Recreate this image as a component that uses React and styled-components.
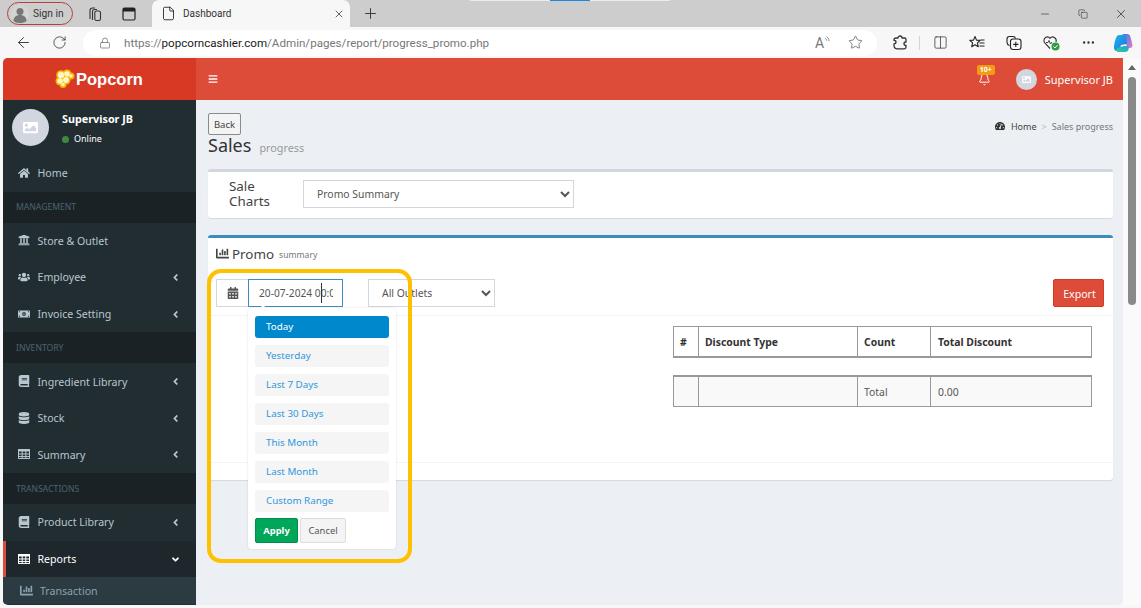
import React from 'react';
import styled, { createGlobalStyle } from 'styled-components';
import { FaHome, FaUniversity, FaUsers, FaMoneyBillAlt, FaBook, FaDatabase, FaChartBar, FaTachometerAlt, FaCalendarAlt, FaAngleLeft, FaAngleDown, FaImage, FaBars, FaCaretUp } from 'react-icons/fa';
import { ArrowLeft, RotateCw, Lock, Star, Plus, X, Minus, File, Copy, Columns2, MoreHorizontal, Bell as BellIcon } from 'lucide-react';

const UI = '"Noto Sans", "Open Sans", sans-serif';
const CHROME = 'Roboto, "Noto Sans", sans-serif';

const Global = createGlobalStyle`
  html, body { margin: 0; padding: 0; height: 608px; overflow: hidden; background: #f7f7f7; }
  #root { height: 608px; }
  * { box-sizing: border-box; }
`;

const Shell = styled.div`width:1141px;height:608px;display:flex;flex-direction:column;overflow:hidden;position:relative;font-family:${UI};`;

const TabStrip = styled.div`height:27px;background:#cdcdcd;display:flex;align-items:flex-end;padding-left:7px;position:relative;flex:none;`;
const TopSliver = styled.div`position:absolute;top:0;left:470px;width:200px;height:1px;background:#ececec;`;
const TopSliverBlue = styled.div`position:absolute;top:0;left:550px;width:40px;height:1px;background:#1e88e0;`;
const SignIn = styled.div`width:66px;height:23px;border:1px solid #b5403f;border-radius:12px;display:flex;align-items:center;gap:4px;padding-left:3px;margin-bottom:2px;font:10.2px ${CHROME};color:#333;white-space:nowrap;`;
const Person = styled.svg`width:18px;height:18px;flex:none;`;
const StripIcon = styled.span`display:flex;justify-content:center;align-items:center;width:${p => p.$w || 35}px;height:27px;color:#333;flex:none;`;
const ActiveTab = styled.div`width:198px;height:27px;background:#f7f7f7;border-radius:7px 7px 0 0;margin-left:9px;display:flex;align-items:center;padding:0 5px 0 9px;font:10px ${CHROME};color:#333;`;
const TabTitle = styled.span`margin-left:7px;flex:1;`;
const WindowControls = styled.div`margin-left:auto;display:flex;width:114px;height:27px;margin-right:1px;`;
const WinBtn = styled.span`flex:1;display:flex;justify-content:center;align-items:center;color:#222;`;

const Toolbar = styled.div`height:31px;background:#f7f7f7;display:flex;align-items:center;flex:none;padding-left:7px;`;
const ToolBtn = styled.span`display:flex;justify-content:center;align-items:center;width:${p => p.$w || 37}px;height:26px;color:${p => p.$c || '#333'};flex:none;position:relative;`;
const AddressBar = styled.div`width:794px;height:26px;margin-left:5px;margin-right:4px;background:#fff;border-radius:13px;display:flex;align-items:center;padding-left:16px;font:11.6px ${CHROME};color:#777;flex:none;`;
const Url = styled.span`margin-left:13px;flex:1;white-space:nowrap;`;
const UrlHost = styled.span`color:#1a1a1a;`;
const ToolDivider = styled.span`width:1px;height:14px;background:#d4d4d4;flex:none;`;
const ReadA = styled.span`font:14px ${CHROME};color:#777;`;
const Waves = styled.svg`width:6px;height:8px;margin:-6px 0 0 0;`;

const Viewport = styled.div`flex:1;display:flex;min-height:0;padding-left:3px;background:#f7f7f7;`;
const Page = styled.div`width:1120px;display:flex;flex-direction:column;height:547px;border-radius:5px 0 5px 5px;overflow:hidden;`;
const Header = styled.header`display:flex;height:42px;flex:none;background:#dd4b39;`;
const Logo = styled.div`width:193px;background:#d73925;display:flex;justify-content:center;align-items:center;color:#fff;font:bold 16.5px "Liberation Sans",sans-serif;padding-right:1px;gap:1px;`;
const Navbar = styled.div`flex:1;display:flex;align-items:center;color:#fff;padding:0 10px 0 12px;`;
const Bell = styled.span`position:relative;display:flex;margin-left:auto;margin-right:25px;`;
const Badge = styled.span`position:absolute;top:-8px;left:-1px;width:18px;height:10px;background:#f39c12;border-radius:2px;font:bold 7px/10px ${UI};text-align:center;color:#fff;`;
const Avatar = styled.span`width:${p => p.$s}px;height:${p => p.$s}px;border-radius:50%;background:#d2d6de;color:#fff;display:flex;justify-content:center;align-items:center;flex:none;`;
const UserName = styled.span`margin-left:8px;font-size:11px;color:#fff;`;

const Body = styled.div`flex:1;display:flex;min-height:0;`;
const Sidebar = styled.aside`width:193px;background:#222d32;flex:none;overflow:hidden;`;
const UserPanel = styled.div`height:55px;display:flex;padding:9px 0 0 9px;gap:13px;`;
const UserInfo = styled.div`color:#fff;padding-top:3px;`;
const UserTitle = styled.div`font:bold 10.8px/14px ${UI};`;
const Status = styled.div`font:9px/12px ${UI};margin-top:7px;display:flex;align-items:center;gap:5px;`;
const Dot = styled.span`width:7px;height:7px;border-radius:50%;background:#3c8a3c;`;
const NavItem = styled.div`height:36.6px;display:flex;align-items:center;font-size:10.6px;color:${p => p.$active ? '#fff' : '#b8c7ce'};background:${p => p.$active ? '#1e282c' : 'transparent'};border-left:3px solid ${p => p.$active ? '#dd4b39' : 'transparent'};padding:0 15px 0 12px;`;
const NavIcon = styled.span`width:19.500px;flex:none;display:flex;font-size:12px;margin-top:-1px;`;
const NavLabel = styled.span`flex:1;white-space:nowrap;`;
const NavSection = styled.div`height:31px;display:flex;align-items:center;background:#1a2226;color:#4b646f;font-size:8.6px;padding-left:13px;`;
const SubItem = styled.div`height:27px;background:#2c3b41;color:#8aa4af;display:flex;align-items:center;font-size:10.6px;padding-left:17px;gap:7px;`;

const Content = styled.main`flex:1;background:#ecf0f5;padding:13px 10px 0 12px;min-width:0;`;
const TitleRow = styled.div`display:flex;justify-content:space-between;height:56px;`;
const BackBtn = styled.button`display:block;width:33px;height:22px;padding:0;background:#f4f4f4;border:1px solid #8a8a8a;border-radius:2px;font:9.5px ${UI};color:#444;`;
const PageTitle = styled.h1`margin:0;font:400 18px/20px ${UI};color:#333;`;
const PageSub = styled.small`font-size:10.8px;color:#999;margin-left:8px;font-weight:400;`;
const Crumbs = styled.div`display:flex;align-items:center;font-size:9px;color:#444;height:12px;margin-top:7px;`;
const CrumbIcon = styled.span`display:flex;margin-right:6px;color:#333;`;
const CrumbSep = styled.span`color:#bbb;margin:0 5px;`;
const CrumbLast = styled.span`color:#777;`;

const Box = styled.section`background:#fff;border-top:3px solid ${p => p.$c};border-radius:3px;box-shadow:0 1px 1px rgba(0,0,0,.1);position:relative;`;
const ChartBox = styled(Box)`height:49px;display:flex;align-items:center;padding:0 0 3px 21px;margin-bottom:17px;`;
const ChartLabel = styled.div`width:74px;padding-right:30px;font:13.4px/15px ${UI};color:#444;`;
const Select = styled.select`height:28px;width:${p => p.$w}px;border:1px solid #d2d6de;background:#fff;border-radius:0;font:10.4px ${UI};color:#555;padding-left:9px;outline:0;`;
const PromoBox = styled(Box)`height:245px;`;
const PromoTitle = styled.div`height:41px;padding:0 0 10px 8px;display:flex;align-items:center;color:#444;font-size:13.4px;gap:3px;`;
const PromoIcon = styled.span`display:flex;font-size:13px;`;
const PromoSmall = styled.small`font-size:8.6px;color:#777;margin-left:2px;margin-top:2px;`;
const FilterRow = styled.div`height:37px;display:flex;padding:0 9px 0 8px;border-bottom:1px solid #f4f4f4;align-items:flex-start;`;
const Addon = styled.span`width:32px;height:28px;border:1px solid #d2d6de;border-right:0;display:flex;justify-content:center;align-items:center;color:#555;font-size:12px;`;
const DateInput = styled.div`width:95px;height:28px;border:1px solid #3c8dbc;padding:0 9px 0 10px;margin-right:25px;position:relative;`;
const DateText = styled.div`font:10.2px/26px ${UI};color:#555;overflow:hidden;white-space:nowrap;`;
const Caret = styled.span`position:absolute;left:72px;top:3px;width:1px;height:20px;background:#333;`;
const ExportBtn = styled.button`margin-left:auto;width:51px;height:28px;background:#dd4b39;border:1px solid #d73925;border-radius:2px;color:#fff;font:10.6px ${UI};padding:1px 0 0 2px;`;
const TableArea = styled.div`height:147px;padding:10px 21px 0 465px;border-bottom:1px solid #f4f4f4;`;
const DataTable = styled.div`display:grid;grid-template-columns:24px 159px 73px 1fr;height:32px;border:1px solid #999;border-width:${p => p.$bold ? '1px 1px 2px 1px' : '2px 1px 1px 1px'};background:${p => p.$bg || '#fff'};margin-bottom:17px;font-size:10.4px;color:${p => p.$bold ? '#333' : '#555'};font-weight:${p => p.$bold ? 700 : 400};`;
const Cell = styled.div`display:flex;align-items:center;padding-left:6px;border-left:${p => p.$first ? 0 : '1px solid #999'};&:last-child{padding-left:7px;}`;

const Highlight = styled.div`position:absolute;left:-1px;top:31px;width:205px;height:294px;border:4px solid #ffc000;border-radius:14px;pointer-events:none;z-index:3;`;
const Menu = styled.div`position:absolute;left:40px;top:70px;width:148px;height:241px;background:#fff;border-radius:4px;box-shadow:0 0 2px rgba(0,0,0,.15);padding:8px 7px 5px;display:flex;flex-direction:column;gap:7px;z-index:2;`;
const MenuArrow = styled.span`position:absolute;left:8px;top:-8px;color:#fff;display:flex;font-size:14px;`;
const MenuItem = styled.div`height:22px;flex:none;border-radius:3px;background:${p => p.$active ? '#08c' : '#f5f5f5'};color:${p => p.$active ? '#fff' : '#2f97dc'};font:9.800px/21px ${UI};padding-left:11px;`;
const MenuActions = styled.div`display:flex;gap:2px;margin-top:-1px;flex:none;`;
const ActionBtn = styled.button`height:25px;width:${p => p.$w}px;padding:0;border-radius:2px;font:${p => p.$go ? 700 : 400} 9.4px ${UI};background:${p => p.$go ? '#00a65a' : '#f4f4f4'};color:${p => p.$go ? '#fff' : '#555'};border:1px solid ${p => p.$go ? '#008d4c' : '#ddd'};`;

const Scrollbar = styled.div`width:18px;flex:none;background:#fafafa;display:flex;flex-direction:column;align-items:center;border-radius:5px 0 0 0;padding-top:7px;height:547px;`;
const ScrollUp = styled.span`width:0;height:0;border:4px solid transparent;border-top:0;border-bottom:5px solid #666;`;
const Thumb = styled.span`width:8px;height:228px;background:#8a8a8a;border-radius:4px;margin-top:7px;`;

const Copilot = () => (
  <svg width="20" height="20" viewBox="0 0 20 20">
    <defs>
      <linearGradient id="cpa" x1="0" y1="0" x2="1" y2="1"><stop offset="0" stopColor="#1fb6e8" /><stop offset="1" stopColor="#1b6fe0" /></linearGradient>
      <linearGradient id="cpb" x1="0" y1="1" x2="1" y2="0"><stop offset="0" stopColor="#37c98a" /><stop offset="1" stopColor="#1aa6e0" /></linearGradient>
      <linearGradient id="cpc" x1="0" y1="0" x2="1" y2="1"><stop offset="0" stopColor="#2f7bea" /><stop offset="1" stopColor="#e77ac0" /></linearGradient>
    </defs>
    <path d="M8 1h6c2 0 3 1 3.500 3L19.500 12c0 2-1 3-2.500 3h-3l-2-10c-.4-2-2-4-4-4z" fill="url(#cpc)" />
    <path d="M6 2h5c1 0 1.800.6 2 2l1 7-6 1c-1 4-2 6-4 6-1.500 0-3-1-3-3C1 10 3 2 6 2z" fill="url(#cpa)" />
    <path d="M4 15l7-2h3c2 0 2 2 1.500 3.500C15 18 14 19 12 19H5c-1.500 0-2-2-1-4z" fill="url(#cpb)" />
  </svg>
);

const PopcornLogo = () => (
  <svg width="20" height="20" viewBox="0 0 20 20">
    <g fill="#f7b500">
      <circle cx="6" cy="6" r="4.800" /><circle cx="12" cy="5" r="4.500" /><circle cx="16" cy="7" r="3.500" />
      <circle cx="5" cy="12" r="4.500" /><circle cx="11" cy="11" r="4.500" /><circle cx="8" cy="15.500" r="3.500" />
    </g>
    <g fill="#fff6c4"><circle cx="6" cy="6" r="3.200" /><circle cx="12" cy="5" r="2.800" /><circle cx="16" cy="7" r="1.800" /><circle cx="5" cy="12" r="2.800" /><circle cx="11" cy="11" r="3" /><circle cx="8" cy="15.500" r="1.800" /></g>
  </svg>
);

const TableGlyph = ({ size = 12 }) => (
  <svg width={size} height={size * 0.83} viewBox="0 0 12 10" fill="none" stroke="currentColor" strokeWidth="1">
    <rect x=".5" y=".5" width="11" height="9" fill="none" />
    <rect x="0" y="0" width="12" height="2.500" fill="currentColor" stroke="none" />
    <path d="M4.200 2v8M7.800 2v8M0 5h12M0 7.500h12" />
  </svg>
);

const TabsGlyph = () => (
  <svg width="16" height="16" viewBox="0 0 16 16" fill="none" stroke="#333" strokeWidth="1.100">
    <path d="M4 13V4.500C4 3 5 2 6.500 2H9" />
    <path d="M6.500 14V5.500C6.500 4.300 7.300 3.500 8.500 3.500H11" />
    <rect x="8.800" y="5" width="5.700" height="9.500" rx="1.800" />
  </svg>
);
const TabListGlyph = () => (
  <svg width="14" height="14" viewBox="0 0 14 14" fill="none">
    <rect x="1" y="1" width="12" height="12" rx="1.500" stroke="#222" strokeWidth="1.200" />
    <rect x="1" y="1" width="12" height="3.500" fill="#222" />
  </svg>
);
const PuzzleGlyph = () => (
  <svg width="15" height="15" viewBox="0 0 15 15" fill="none" stroke="#333" strokeWidth="1.300" strokeLinejoin="round">
    <path d="M5 3C5 1.500 6.200 1 7 1c1.500 0 2 1.300 2 2h2.500c.8 0 1.500.7 1.500 1.500V7c-1.200 0-2 .8-2 1.700 0 1 .8 1.800 2 1.800v1.500c0 1-.7 1.800-1.700 1.800H4c-1.500 0-3-1.300-3-3v-2c1.300 0 2-.9 2-1.800S2.300 5.400 1 5.400V4.500C1 3.500 2 3 3 3z" />
  </svg>
);
const FavGlyph = () => (
  <svg width="16" height="15" viewBox="0 0 16 15" fill="none" stroke="#222" strokeWidth="1.100" strokeLinejoin="round">
    <path d="M6 1.500l1.500 3.600 3.700.3-2.800 2.500.9 3.800L6 9.700l-3.300 2 .9-3.800L.8 5.400l3.700-.3z" />
    <path d="M11.500 5h4M10.500 8h5M10.500 11h5" />
  </svg>
);
const CollectGlyph = () => (
  <svg width="16" height="16" viewBox="0 0 16 16" fill="none" stroke="#222" strokeWidth="1.100">
    <path d="M3.500 10.500C2 10 1 9 1 7.500V4c0-1.500 1-2.500 2.500-2.500H7c1.300 0 2.300.8 2.500 2" />
    <rect x="4.500" y="4" width="10.500" height="10.500" rx="2.500" fill="#f7f7f7" />
    <path d="M9.800 6.800v5.200M7.200 9.400h5.200" />
  </svg>
);
const HeartGlyph = () => (
  <svg width="17" height="16" viewBox="0 0 17 16" fill="none">
    <path d="M7 13.500L1.800 8C.4 6.400.7 3.700 2.600 2.500 4.200 1.600 6 2 7 3.300c1-1.300 2.800-1.700 4.400-.8C13 3.500 13.500 5.500 13 7" stroke="#333" strokeWidth="1.100" />
    <path d="M3 7.500h2l1-2 1.500 3.500L9 7" stroke="#333" strokeWidth=".9" />
    <circle cx="12.500" cy="11.500" r="4" fill="#2e9e44" />
    <path d="M10.500 11.500l1.500 1.500 2.500-2.800" stroke="#fff" strokeWidth="1" />
  </svg>
);

const sideTop = [
  { label: 'Store & Outlet', icon: <FaUniversity /> },
  { label: 'Employee', icon: <FaUsers />, more: true },
  { label: 'Invoice Setting', icon: <FaMoneyBillAlt />, more: true },
];
const sideMid = [
  { label: 'Ingredient Library', icon: <FaBook />, more: true },
  { label: 'Stock', icon: <FaDatabase />, more: true },
  { label: 'Summary', icon: <TableGlyph />, more: true },
];
const ranges = ['Today', 'Yesterday', 'Last 7 Days', 'Last 30 Days', 'This Month', 'Last Month', 'Custom Range'];

const Nav = ({ item, active, open }) => (
  <NavItem $active={active}>
    <NavIcon>{item.icon}</NavIcon>
    <NavLabel>{item.label}</NavLabel>
    {item.more && (open ? <FaAngleDown size={11} /> : <FaAngleLeft size={11} />)}
  </NavItem>
);

export default function App() {
  return (
    <Shell>
      <Global />
      <TabStrip>
        <TopSliver /><TopSliverBlue />
        <SignIn>
          <Person viewBox="0 0 18 18"><circle cx="9" cy="9" r="9" fill="#d4d4d4" /><circle cx="9" cy="6.500" r="3.500" fill="#777" /><path d="M2.500 16c0-4 3-6 6.500-6s6.500 2 6.500 6c-2 1.500-4 2-6.500 2s-4.500-.5-6.500-2z" fill="#777" /></Person>
          Sign in
        </SignIn>
        <StripIcon $w={42}><TabsGlyph /></StripIcon>
        <StripIcon $w={28}><TabListGlyph /></StripIcon>
        <ActiveTab>
          <File size={15} strokeWidth={1.3} color="#111" />
          <TabTitle>Dashboard</TabTitle>
          <X size={12} strokeWidth={1.5} />
        </ActiveTab>
        <StripIcon $w={40}><Plus size={17} strokeWidth={1.3} /></StripIcon>
        <WindowControls>
          <WinBtn><Minus size={12} strokeWidth={1.2} /></WinBtn>
          <WinBtn><Copy size={10} strokeWidth={1.3} /></WinBtn>
          <WinBtn><X size={14} strokeWidth={1.2} /></WinBtn>
        </WindowControls>
      </TabStrip>
      <Toolbar>
        <ToolBtn $w={33}><ArrowLeft size={17} strokeWidth={1.3} /></ToolBtn>
        <ToolBtn $w={38}><RotateCw size={15} strokeWidth={1.3} /></ToolBtn>
        <AddressBar>
          <Lock size={12} strokeWidth={1.4} color="#666" />
          <Url>https://<UrlHost>popcorncashier.com</UrlHost>/Admin/pages/report/progress_promo.php</Url>
          <ToolBtn $w={33}>
            <ReadA>A</ReadA>
            <Waves viewBox="0 0 6 8" fill="none" stroke="#777" strokeWidth=".9"><path d="M1 2c1 .7 1.500 1.500 1.500 2.500M2.500 .5C4 1.500 5 3 5 5" /></Waves>
          </ToolBtn>
          <ToolBtn $w={33}><Star size={15} strokeWidth={1.2} color="#555" /></ToolBtn>
          <ToolBtn $w={5} />
        </AddressBar>
        <ToolBtn $w={38}><PuzzleGlyph /></ToolBtn>
        <ToolDivider />
        <ToolBtn $w={41}><Columns2 size={15} strokeWidth={1.2} /></ToolBtn>
        <ToolBtn $w={32}><FavGlyph /></ToolBtn>
        <ToolBtn $w={42}><CollectGlyph /></ToolBtn>
        <ToolBtn $w={32}><HeartGlyph /></ToolBtn>
        <ToolBtn $w={42}><MoreHorizontal size={15} strokeWidth={1.8} /></ToolBtn>
        <ToolBtn $w={28}><Copilot /></ToolBtn>
      </Toolbar>
      <Viewport>
        <Page>
          <Header>
            <Logo><PopcornLogo />Popcorn</Logo>
            <Navbar>
              <FaBars size={10} />
              <Bell><BellIcon size={13} strokeWidth={1.8} /><Badge>10+</Badge></Bell>
              <Avatar $s={21}><FaImage size={9} /></Avatar>
              <UserName>Supervisor JB</UserName>
            </Navbar>
          </Header>
          <Body>
            <Sidebar>
              <UserPanel>
                <Avatar $s={37}><FaImage size={15} /></Avatar>
                <UserInfo>
                  <UserTitle>Supervisor JB</UserTitle>
                  <Status><Dot />Online</Status>
                </UserInfo>
              </UserPanel>
              <Nav item={{ label: 'Home', icon: <FaHome /> }} />
              <NavSection>MANAGEMENT</NavSection>
              {sideTop.map(i => <Nav key={i.label} item={i} />)}
              <NavSection>INVENTORY</NavSection>
              {sideMid.map(i => <Nav key={i.label} item={i} />)}
              <NavSection>TRANSACTIONS</NavSection>
              <Nav item={{ label: 'Product Library', icon: <FaBook />, more: true }} />
              <Nav active open item={{ label: 'Reports', icon: <TableGlyph />, more: true }} />
              <SubItem><FaChartBar size={13} />Transaction</SubItem>
            </Sidebar>
            <Content>
              <TitleRow>
                <div>
                  <BackBtn>Back</BackBtn>
                  <PageTitle>Sales<PageSub>progress</PageSub></PageTitle>
                </div>
                <Crumbs>
                  <CrumbIcon><FaTachometerAlt size={10} /></CrumbIcon>Home<CrumbSep>&gt;</CrumbSep><CrumbLast>Sales progress</CrumbLast>
                </Crumbs>
              </TitleRow>
              <ChartBox $c="#d2d6de">
                <ChartLabel>Sale Charts</ChartLabel>
                <Select $w={271} defaultValue="Promo Summary"><option>Promo Summary</option></Select>
              </ChartBox>
              <PromoBox $c="#3c8dbc">
                <PromoTitle><PromoIcon><FaChartBar /></PromoIcon>Promo<PromoSmall>summary</PromoSmall></PromoTitle>
                <FilterRow>
                  <Addon><FaCalendarAlt /></Addon>
                  <DateInput><DateText>20-07-2024 00:00</DateText><Caret /></DateInput>
                  <Select $w={127} defaultValue="All Outlets"><option>All Outlets</option></Select>
                  <ExportBtn>Export</ExportBtn>
                </FilterRow>
                <TableArea>
                  <DataTable $bold>
                    <Cell $first>#</Cell><Cell>Discount Type</Cell><Cell>Count</Cell><Cell>Total Discount</Cell>
                  </DataTable>
                  <DataTable $bg="#f9f9f9">
                    <Cell $first /><Cell /><Cell>Total</Cell><Cell>0.00</Cell>
                  </DataTable>
                </TableArea>
                <Menu>
                  <MenuArrow><FaCaretUp /></MenuArrow>
                  {ranges.map((r, i) => <MenuItem key={r} $active={i === 0}>{r}</MenuItem>)}
                  <MenuActions>
                    <ActionBtn $w={43} $go>Apply</ActionBtn>
                    <ActionBtn $w={46}>Cancel</ActionBtn>
                  </MenuActions>
                </Menu>
                <Highlight />
              </PromoBox>
            </Content>
          </Body>
        </Page>
        <Scrollbar><ScrollUp /><Thumb /></Scrollbar>
      </Viewport>
    </Shell>
  );
}
